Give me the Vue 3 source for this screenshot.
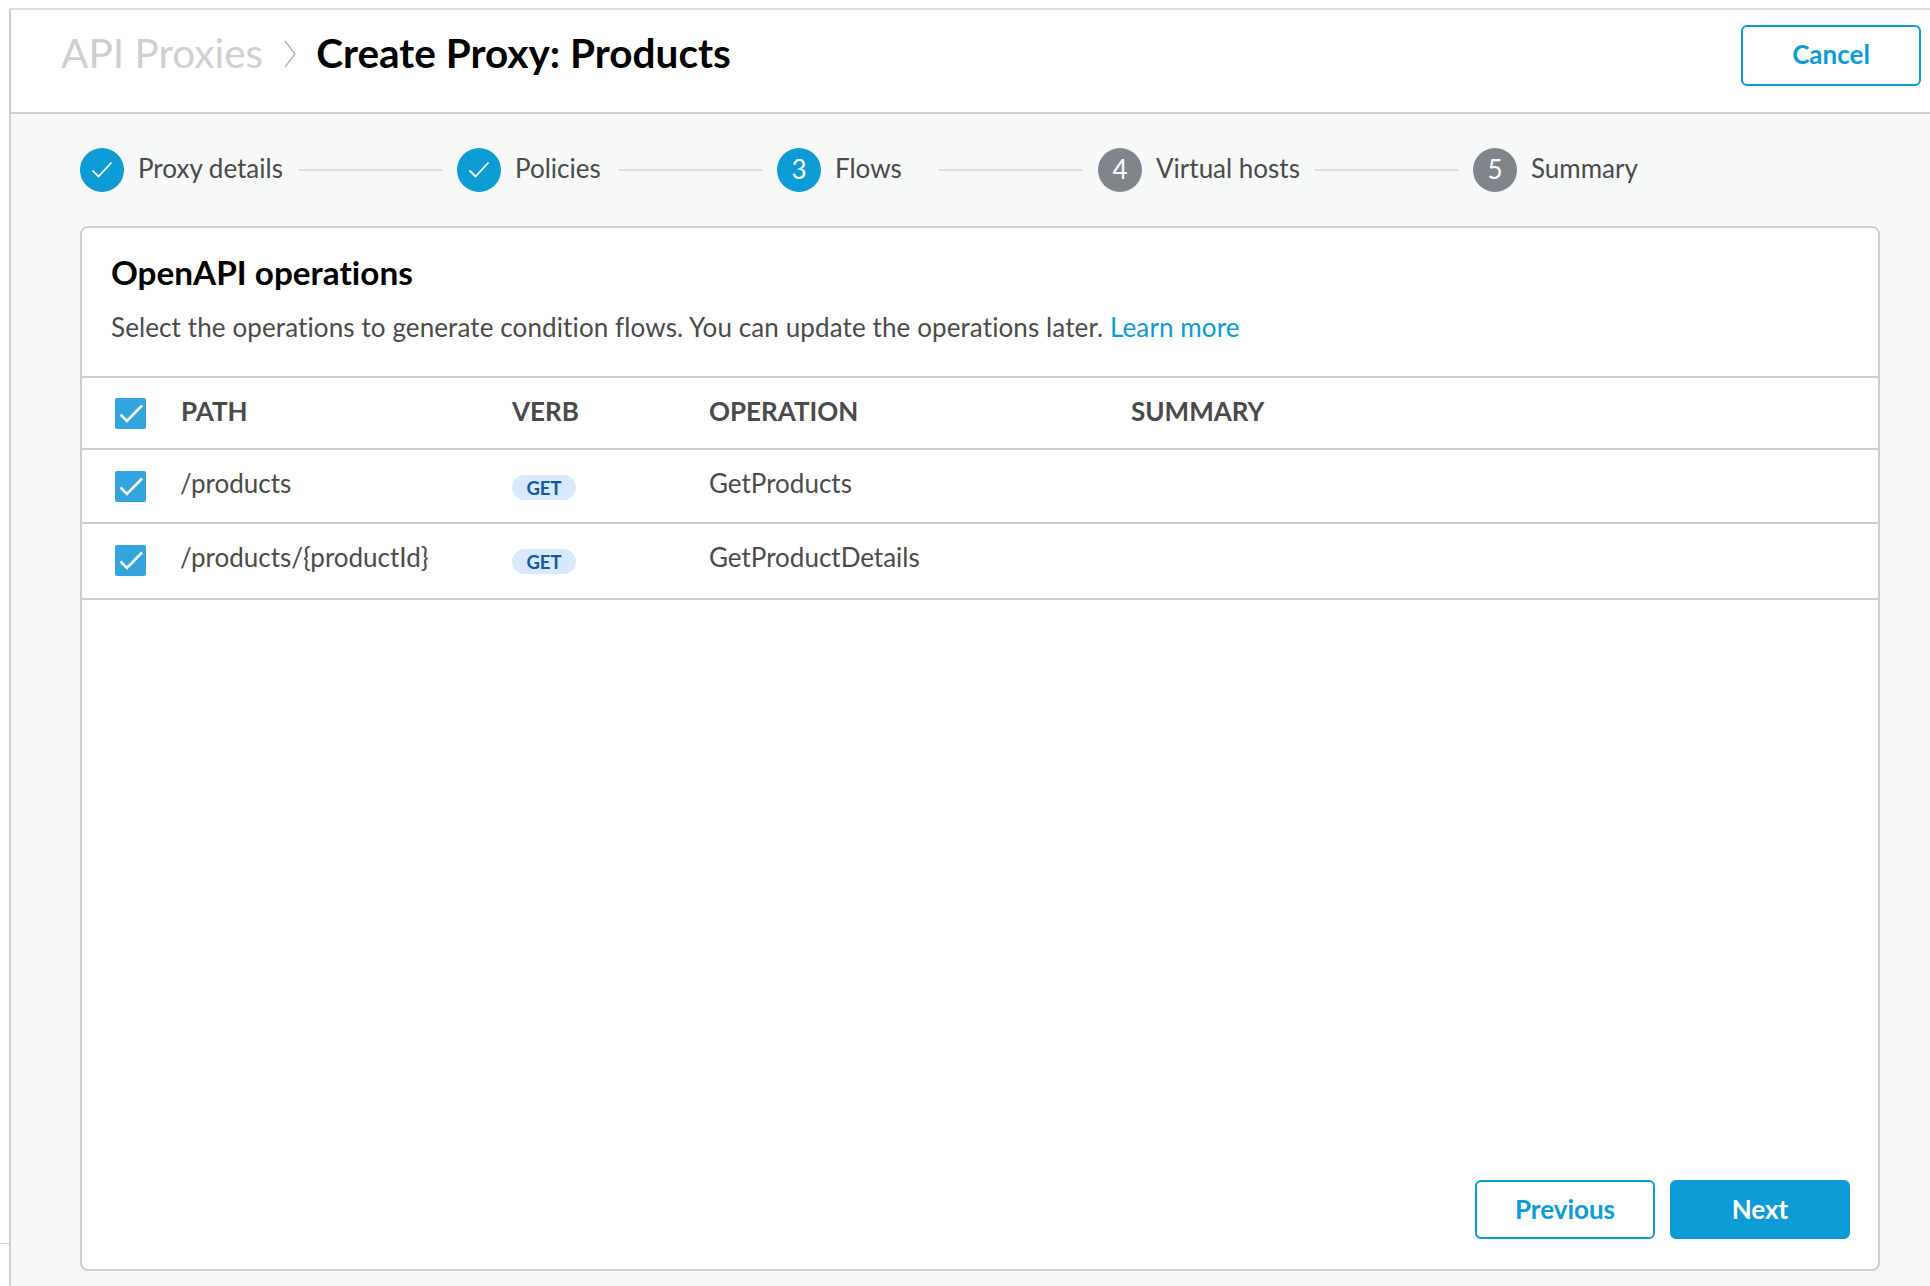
<template>
  <div class="page">
    <div class="shell">
      <header class="top-bar">
        <h1 class="crumbs">
          <span class="crumb-parent">API Proxies</span>
          <svg class="crumb-sep" width="12" height="28" viewBox="0 0 12 28">
            <path d="M1 1 L11 14 L1 27" fill="none" stroke="#b4b6b6" stroke-width="1.4" />
          </svg>
          <span class="crumb-current">Create Proxy: Products</span>
        </h1>
        <button class="btn btn-outline btn-cancel">Cancel</button>
      </header>

      <main class="content">
        <ol class="steps">
          <li v-for="step in steps" :key="step.label" class="step">
            <span class="step-circle" :class="{ 'step-todo': step.state === 'todo' }">
              <svg v-if="step.state === 'done'" width="22" height="18" viewBox="0 0 22 18">
                <path d="M1.5 9.5 L7.5 15.5 L20.5 1.5" fill="none" stroke="#fff" stroke-width="1.8" />
              </svg>
              <span v-else class="step-num">{{ step.num }}</span>
            </span>
            <span class="step-label" :style="{ width: step.labelWidth + 'px' }">{{ step.label }}</span>
            <span v-if="step.num < 5" class="step-line"></span>
          </li>
        </ol>

        <section class="card">
          <div class="card-head">
            <h2 class="card-title">OpenAPI operations</h2>
            <p class="card-desc">
              Select the operations to generate condition flows. You can update the operations later.
              <a class="link">Learn more</a>
            </p>
          </div>

          <div class="table">
            <div class="tr th">
              <span class="check">
                <svg width="31" height="31" viewBox="0 0 31 31">
                  <path d="M5.5 16.5 L12 23 L27 7.5" fill="none" stroke="#fff" stroke-width="2.6" />
                </svg>
              </span>
              <span>PATH</span>
              <span>VERB</span>
              <span>OPERATION</span>
              <span>SUMMARY</span>
            </div>
            <div v-for="op in operations" :key="op.path" class="tr td" :class="op.rowClass">
              <span class="check">
                <svg width="31" height="31" viewBox="0 0 31 31">
                  <path d="M5.5 16.5 L12 23 L27 7.5" fill="none" stroke="#fff" stroke-width="2.6" />
                </svg>
              </span>
              <span class="cell-text cell-path">{{ op.path }}</span>
              <span class="verb-cell"><span class="badge">{{ op.verb }}</span></span>
              <span class="cell-text">{{ op.name }}</span>
              <span></span>
            </div>
          </div>

          <div class="card-foot">
            <button class="btn btn-outline">Previous</button>
            <button class="btn btn-solid">Next</button>
          </div>
        </section>
      </main>
    </div>
    <span class="side-tick"></span>
  </div>
</template>

<script setup>
const steps = [
  { num: 1, label: 'Proxy details', state: 'done', labelWidth: 161 },
  { num: 2, label: 'Policies', state: 'done', labelWidth: 104 },
  { num: 3, label: 'Flows', state: 'active', labelWidth: 104 },
  { num: 4, label: 'Virtual hosts', state: 'todo', labelWidth: 159 },
  { num: 5, label: 'Summary', state: 'todo', labelWidth: 110 },
]

const operations = [
  { path: '/products', verb: 'GET', name: 'GetProducts', rowClass: 'row-mid' },
  { path: '/products/{productId}', verb: 'GET', name: 'GetProductDetails', rowClass: 'row-last' },
]
</script>

<style>
html,
body {
  margin: 0;
  background: #fff;
}
</style>

<style scoped>
.page {
  position: relative;
  height: 1286px;
  overflow: hidden;
  padding-top: 8px;
  padding-left: 9px;
  box-sizing: border-box;
  font-family: Lato, "Liberation Sans", sans-serif;
  font-variant-ligatures: none;
  color: #4a4a4a;
}

.shell {
  height: 100%;
  display: flex;
  flex-direction: column;
  border-left: 2px solid #cdcfcf;
  border-top: 2px solid #dcdcdf;
}

.top-bar {
  height: 104px;
  box-sizing: border-box;
  display: flex;
  justify-content: space-between;
  align-items: flex-start;
  padding: 16px 9px 0 50px;
  border-bottom: 2px solid #cdcfcf;
  background: #fff;
}

.crumbs {
  margin: 0;
  display: flex;
  align-items: center;
  height: 52px;
  font-size: 40.5px;
  font-weight: 700;
  color: #000;
}

.crumb-parent {
  color: #cfcfcf;
  font-weight: 400;
}

.crumb-sep {
  margin: 4px 20px 0 21px;
}

.content {
  flex: 1;
  background: #f7f9f9;
  padding: 34px 50px 0 69px;
}

.steps {
  list-style: none;
  margin: 0;
  padding: 0;
  display: flex;
  height: 44px;
}

.step {
  display: flex;
  align-items: center;
}

.step:nth-child(4) {
  margin-left: 1px;
}

.step-circle {
  width: 44px;
  height: 44px;
  border-radius: 50%;
  background: #0c9bd4;
  color: #fff;
  display: flex;
  align-items: center;
  justify-content: center;
  font-size: 26px;
  flex-shrink: 0;
}

.step-num {
  margin-top: -3px;
}

.step-todo {
  background: #80858c;
}

.step-label {
  margin-left: 14px;
  margin-top: -4px;
  font-size: 26px;
  color: #4a4a4a;
  white-space: nowrap;
}

.step-line {
  width: 144px;
  height: 2px;
  margin: 0 14px 0 0;
  background: #dcdfdf;
}

.card {
  margin-top: 34px;
  height: 1045px;
  box-sizing: border-box;
  background: #fff;
  border: 2px solid #cdcfcf;
  border-radius: 8px;
  display: flex;
  flex-direction: column;
}

.card-head {
  height: 148px;
  box-sizing: border-box;
  padding: 24px 29px 0;
}

.card-title {
  margin: 0;
  font-size: 33.3px;
  line-height: 40px;
  font-weight: 700;
  color: #000;
}

.card-desc {
  margin: 18px 0 0;
  font-size: 26px;
  line-height: 34px;
  letter-spacing: 0.11px;
  color: #4a4a4a;
}

.link {
  color: #0c9bd4;
}

.tr {
  display: grid;
  grid-template-columns: 66px 331px 197px 422px 1fr;
  padding-left: 33px;
  padding-bottom: 4px;
  align-items: center;
  border-top: 2px solid #cdcfcf;
  box-sizing: border-box;
}

.th {
  height: 72px;
  font-size: 26px;
  font-weight: 700;
}

.td {
  font-size: 26px;
}

.row-mid {
  height: 74px;
}

.row-last {
  height: 78px;
  padding-bottom: 6px;
  border-bottom: 2px solid #cdcfcf;
}

.check {
  width: 31px;
  height: 31px;
  background: #32a5df;
  border-radius: 2px;
  display: block;
  margin-top: 4px;
}

.check svg {
  display: block;
}

.cell-text {
  margin-top: -2px;
}

.cell-path {
  margin-left: -1px;
}

.verb-cell {
  display: flex;
  margin-top: 7px;
}

.badge {
  width: 64px;
  height: 25px;
  border-radius: 13px;
  background: #d8e9fc;
  color: #145a9c;
  font-size: 18.5px;
  font-weight: 700;
  display: flex;
  align-items: center;
  justify-content: center;
}

.card-foot {
  margin-top: auto;
  padding: 0 28px 30px;
  display: flex;
  justify-content: flex-end;
  gap: 15px;
}

.btn {
  width: 180px;
  height: 59px;
  box-sizing: border-box;
  border-radius: 6px;
  font-family: inherit;
  font-size: 26px;
  font-weight: 700;
  padding: 0 0 2px;
}

.btn-outline {
  background: #fff;
  border: 2px solid #0c9bd4;
  color: #0c9bd4;
}

.btn-solid {
  background: #0c9bd4;
  border: 2px solid #0c9bd4;
  color: #fff;
}

.btn-cancel {
  height: 61px;
  margin-top: -1px;
  padding-bottom: 4px;
}

.side-tick {
  position: absolute;
  left: 0;
  top: 1243px;
  width: 9px;
  height: 1px;
  background: #cdcfcf;
}
</style>
